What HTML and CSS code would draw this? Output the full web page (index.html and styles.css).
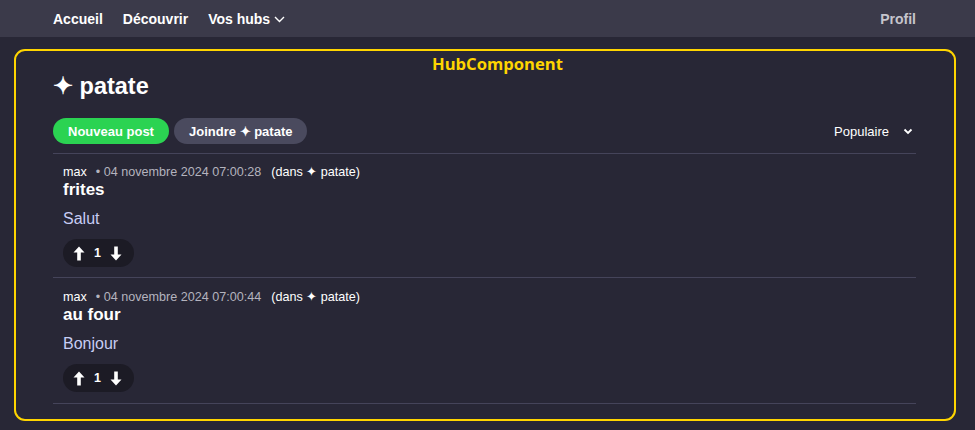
FILE: index.html
```html
<!DOCTYPE html>
<html lang="fr">
<head>
<meta charset="utf-8">
<title>patate</title>
<link rel="stylesheet" href="styles.css">
</head>
<body>
<nav class="topnav">
  <div class="nav-left">
    <a class="nav-link">Accueil</a>
    <a class="nav-link">Découvrir</a>
    <a class="nav-link">Vos hubs
      <svg class="chev" width="11" height="7" viewBox="0 0 11 7"><path d="M1 1l4.5 4.5L10 1" fill="none" stroke="#fff" stroke-width="1.4"/></svg>
    </a>
  </div>
  <a class="nav-link profil">Profil</a>
</nav>
<main class="hub">
  <div class="hub-label">HubComponent</div>
  <h1 class="hub-title">✦ patate</h1>
  <div class="toolbar">
    <div class="actions">
      <button class="btn btn-green">Nouveau post</button>
      <button class="btn btn-gray">Joindre ✦ patate</button>
    </div>
    <div class="sort">Populaire
      <svg class="sort-chev" width="10" height="7" viewBox="0 0 10 7"><path d="M1.5 1.5L5 5l3.5-3.5" fill="none" stroke="#fff" stroke-width="1.8"/></svg>
    </div>
  </div>
  <article class="post">
    <div class="meta"><span class="author">max</span><span class="date">• 04 novembre 2024 07:00:28</span><span class="in">(dans ✦ patate)</span></div>
    <h2 class="post-title">frites</h2>
    <p class="post-body">Salut</p>
    <div class="votes">
      <svg width="12" height="15" viewBox="0 0 12 15"><path d="M6 0.5L11.5 6.5H7.8V14.5H4.2V6.5H0.5z" fill="#fff"/></svg>
      <span class="score">1</span>
      <svg width="12" height="15" viewBox="0 0 12 15"><path d="M6 14.5L11.5 8.5H7.8V0.5H4.2V8.5H0.5z" fill="#fff"/></svg>
    </div>
  </article>
  <article class="post">
    <div class="meta"><span class="author">max</span><span class="date">• 04 novembre 2024 07:00:44</span><span class="in">(dans ✦ patate)</span></div>
    <h2 class="post-title">au four</h2>
    <p class="post-body">Bonjour</p>
    <div class="votes">
      <svg width="12" height="15" viewBox="0 0 12 15"><path d="M6 0.5L11.5 6.5H7.8V14.5H4.2V6.5H0.5z" fill="#fff"/></svg>
      <span class="score">1</span>
      <svg width="12" height="15" viewBox="0 0 12 15"><path d="M6 14.5L11.5 8.5H7.8V0.5H4.2V8.5H0.5z" fill="#fff"/></svg>
    </div>
  </article>
</main>
</body>
</html>
```
FILE: styles.css
```css
* { box-sizing: border-box; }
html, body { margin: 0; padding: 0; }
body {
  background: #282736;
  color: #fff;
  font-family: "Liberation Sans", Arial, sans-serif;
  width: 975px;
  height: 430px;
  overflow: hidden;
}
.topnav {
  height: 37px;
  background: #3b3a4a;
  display: flex;
  align-items: center;
  justify-content: space-between;
  padding: 0 59px 0 53px;
}
.nav-left { display: flex; align-items: center; gap: 20px; }
.nav-link {
  font-size: 14px;
  font-weight: bold;
  color: #fff;
  display: flex;
  align-items: center;
}
.chev { margin-left: 4px; margin-top: 2px; }
.profil { color: #c6c5cd; }
.hub {
  position: relative;
  margin: 12px 19px 0 14px;
  height: 372px;
  border: 2px solid #ffd500;
  border-radius: 11px;
  padding: 21px 38px 0 37px;
}
.hub-label {
  position: absolute;
  top: 4px;
  left: 416px;
  font-family: "Open Sans", sans-serif;
  font-weight: bold;
  font-size: 16.6px;
  line-height: 18px;
  color: #ffd500;
}
.hub-title {
  margin: 0;
  font-size: 23.5px;
  line-height: 28px;
  font-weight: bold;
}
.toolbar {
  margin-top: 18px;
  display: flex;
  align-items: center;
  justify-content: space-between;
  padding-bottom: 9px;
  border-bottom: 1px solid #45445a;
}
.actions { display: flex; gap: 5px; }
.btn {
  height: 26px;
  border: none;
  border-radius: 13px;
  padding: 0 15px;
  font-family: "Liberation Sans", Arial, sans-serif;
  font-size: 13px;
  font-weight: bold;
  color: #fff;
}
.btn-green { background: #2bd352; }
.btn-gray { background: #4a4a5e; }
.sort {
  font-size: 13px;
  display: flex;
  align-items: center;
  margin-right: 3px;
}
.sort-chev { margin-left: 14px; }
.post {
  padding: 10px 10px 10px;
  border-bottom: 1px solid #45445a;
}
.post + .post { padding-top: 11px; padding-bottom: 11px; }
.meta {
  font-size: 12.6px;
  line-height: 16px;
  display: flex;
}
.author { color: #fff; }
.date { color: #b4b3be; margin-left: 9px; }
.in { color: #fff; margin-left: 10px; }
.post-title {
  margin: 0;
  font-size: 17px;
  line-height: 20px;
  font-weight: bold;
}
.post-body {
  margin: 9px 0 0;
  font-size: 16px;
  line-height: 20px;
  color: #c7cdf4;
}
.votes {
  margin-top: 10px;
  width: 71px;
  height: 28px;
  border-radius: 14px;
  background: #1c1b25;
  display: flex;
  align-items: center;
  gap: 9px;
  padding-left: 10px;
}
.score { font-size: 12.5px; font-weight: bold; }
```
